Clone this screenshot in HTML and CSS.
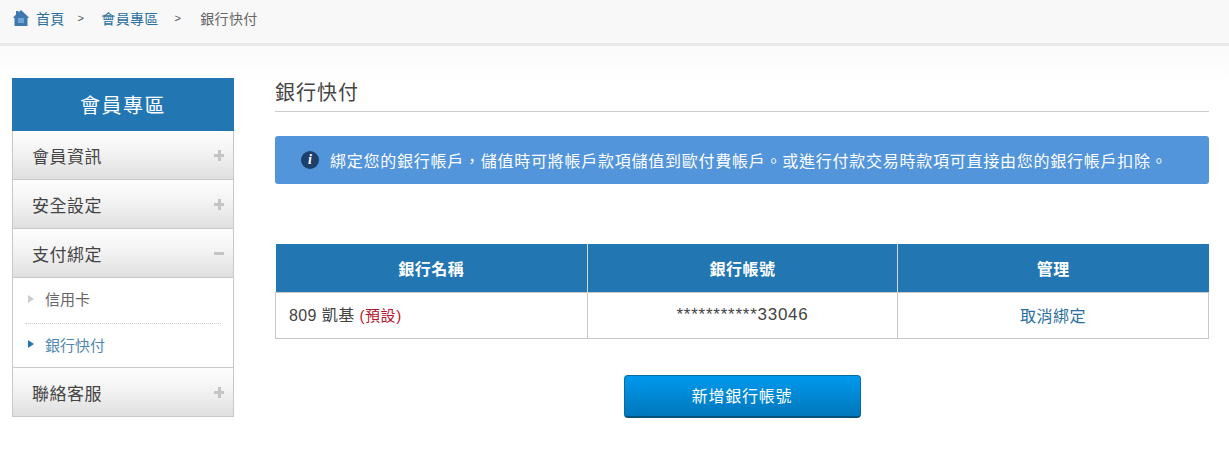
FILE: index.html
```html
<!DOCTYPE html>
<html lang="zh-TW">
<head>
    <meta charset="UTF-8">
    <title>銀行快付</title>
    <link rel="stylesheet" href="styles.css">
</head>
<body>
    <div class="breadcrumb">
        <svg class="home-icon" width="16" height="17" viewBox="0 0 16 17"><path d="M8 1 L16 8.5 L14.5 9 L14.5 17 L1.5 17 L1.5 9 L0 8.5 L3 5.6 L3 2 L5.5 2 L5.5 3.4 Z" fill="#3f78ae"/><rect x="5" y="9" width="6" height="5" fill="#6ea3d6"/></svg>
        <a class="crumb-link" href="#">首頁</a>
        <span class="crumb-sep">&gt;</span>
        <a class="crumb-link" href="#">會員專區</a>
        <span class="crumb-sep crumb-sep-last">&gt;</span>
        <span class="crumb-current">銀行快付</span>
    </div>

    <div class="page">
        <div class="sidebar">
            <div class="side-title">會員專區</div>
            <div class="side-item"><span>會員資訊</span><span class="side-plus"></span></div>
            <div class="side-item"><span>安全設定</span><span class="side-plus"></span></div>
            <div class="side-item"><span>支付綁定</span><span class="side-minus"></span></div>
            <div class="side-sub">
                <div class="sub-item"><span class="arrow"></span>信用卡</div>
                <div class="sub-item sub-active"><span class="arrow"></span>銀行快付</div>
            </div>
            <div class="side-item side-last"><span>聯絡客服</span><span class="side-plus"></span></div>
        </div>

        <div class="main">
            <h1 class="main-title">銀行快付</h1>
            <div class="notice">
                <span class="notice-icon">i</span>
                <span>綁定您的銀行帳戶，儲值時可將帳戶款項儲值到歐付費帳戶。或進行付款交易時款項可直接由您的銀行帳戶扣除。</span>
            </div>
            <table class="bank-table">
                <tr>
                    <th class="col-name">銀行名稱</th>
                    <th class="col-account">銀行帳號</th>
                    <th>管理</th>
                </tr>
                <tr>
                    <td class="cell-name">809 凱基 <span class="default-tag">(預設)</span></td>
                    <td>***********33046</td>
                    <td><a class="unbind" href="#">取消綁定</a></td>
                </tr>
            </table>
            <div class="actions">
                <button class="add-button">新增銀行帳號</button>
            </div>
        </div>
    </div>
</body>
</html>
```

FILE: styles.css
```css
* {
    box-sizing: border-box;
}

body {
    margin: 0;
    background-color: #fff;
    font-family: "Liberation Sans", "Noto Sans CJK TC", sans-serif;
    font-size: 14px;
    color: #333;
}

a {
    text-decoration: none;
}

.breadcrumb {
    display: flex;
    align-items: center;
    height: 46px;
    padding: 0 0 8px 13px;
    background-color: #f8f8f8;
    border-bottom: 3px solid #e8e8e8;
    letter-spacing: 0.3px;
}

.home-icon {
    margin-right: 7px;
}

.crumb-link {
    color: #2a6f9e;
}

.crumb-sep {
    margin: 0 17px 0 13px;
    font-size: 11px;
    color: #555;
}

.crumb-sep-last {
    margin: 0 19px 0 16px;
}

.crumb-current {
    color: #666;
}

.page {
    display: flex;
    height: 413px;
    padding: 32px 20px 0 12px;
    background: linear-gradient(#fafafa, #fff 34px);
}

.sidebar {
    width: 222px;
    margin-right: 41px;
    flex-shrink: 0;
    align-self: flex-start;
}

.side-title {
    height: 53px;
    line-height: 56px;
    text-align: center;
    font-size: 20px;
    letter-spacing: 1.5px;
    color: #fff;
    background-color: #2277b3;
}

.side-item {
    display: flex;
    justify-content: space-between;
    align-items: center;
    height: 49px;
    padding: 0 9px 0 19px;
    font-size: 17px;
    letter-spacing: 0.5px;
    color: #444;
    background: linear-gradient(#fdfdfd, #f3f3f3 45%, #dfdfdf);
    border: 1px solid #c8c8c8;
    border-top: none;
}

.side-plus,
.side-minus {
    position: relative;
    width: 10px;
    height: 10px;
}

.side-plus::before,
.side-minus::before {
    content: "";
    position: absolute;
    left: 0;
    top: 4px;
    width: 10px;
    height: 3px;
    background-color: #c4c4c4;
}

.side-plus::after {
    content: "";
    position: absolute;
    left: 3.5px;
    top: 0;
    width: 3px;
    height: 11px;
    background-color: #c4c4c4;
}

.side-sub {
    height: 89px;
    padding: 0 12px;
    background-color: #fff;
    border-left: 1px solid #c8c8c8;
    border-right: 1px solid #c8c8c8;
}

.sub-item {
    display: flex;
    align-items: center;
    height: 43px;
    padding-bottom: 3px;
    font-size: 15px;
    color: #666;
}

.sub-item:first-child {
    height: 46px;
    padding-bottom: 4px;
    border-bottom: 1px dotted #ccc;
}

.arrow {
    width: 0;
    height: 0;
    margin: 0 11px 0 3px;
    border-left: 6px solid #ccc;
    border-top: 4px solid transparent;
    border-bottom: 4px solid transparent;
}

.sub-active {
    color: #4f87b0;
}

.sub-active .arrow {
    border-left-color: #2277b3;
}

.side-last {
    height: 50px;
    border-top: 1px solid #c8c8c8;
}

.main {
    flex: 1;
}

.main-title {
    height: 34px;
    margin: 0 0 24px;
    font-size: 20px;
    font-weight: normal;
    letter-spacing: 1px;
    line-height: 31px;
    color: #444;
    border-bottom: 1px solid #ccc;
}

.notice {
    display: flex;
    align-items: center;
    height: 48px;
    padding: 0 26px;
    font-size: 16px;
    letter-spacing: 0.75px;
    color: #fff;
    background-color: #5295db;
    border-radius: 3px;
}

.notice-icon {
    width: 18px;
    height: 18px;
    margin-right: 11px;
    flex-shrink: 0;
    font-family: "Liberation Serif", serif;
    font-size: 14px;
    font-style: italic;
    font-weight: bold;
    letter-spacing: 0;
    line-height: 18px;
    text-align: center;
    background-color: #1c3f6b;
    border-radius: 50%;
}

.bank-table {
    width: 100%;
    margin-top: 60px;
    border-collapse: collapse;
    table-layout: fixed;
}

.bank-table th {
    height: 48px;
    font-size: 16px;
    font-weight: bold;
    letter-spacing: 0.5px;
    color: #fff;
    background-color: #2277b3;
    border-right: 1px solid #d8d8d8;
}

.bank-table th:last-child {
    border-right: none;
}

.col-name {
    width: 312px;
}

.col-account {
    width: 310px;
}

.bank-table td {
    height: 46px;
    padding-bottom: 2px;
    font-size: 17px;
    letter-spacing: 0.75px;
    text-align: center;
    color: #444;
    border: 1px solid #c8c8c8;
}

.bank-table .cell-name {
    padding-left: 13px;
    padding-bottom: 3px;
    font-size: 16px;
    letter-spacing: 0.4px;
    text-align: left;
}

.default-tag {
    font-size: 15px;
    letter-spacing: 0.6px;
    color: #b5162b;
}

.bank-table .unbind {
    font-size: 16px;
    letter-spacing: 0.5px;
    color: #2a6f9e;
}

.actions {
    display: flex;
    justify-content: center;
    margin-top: 36px;
}

.add-button {
    width: 237px;
    height: 43px;
    padding-bottom: 2px;
    font-family: inherit;
    font-size: 16px;
    letter-spacing: 0.8px;
    color: #fff;
    background: linear-gradient(#0099ee, #0077bb);
    border: 1px solid #0a6a9f;
    border-bottom: 2px solid #05527d;
    border-radius: 4px;
    cursor: pointer;
}
```
